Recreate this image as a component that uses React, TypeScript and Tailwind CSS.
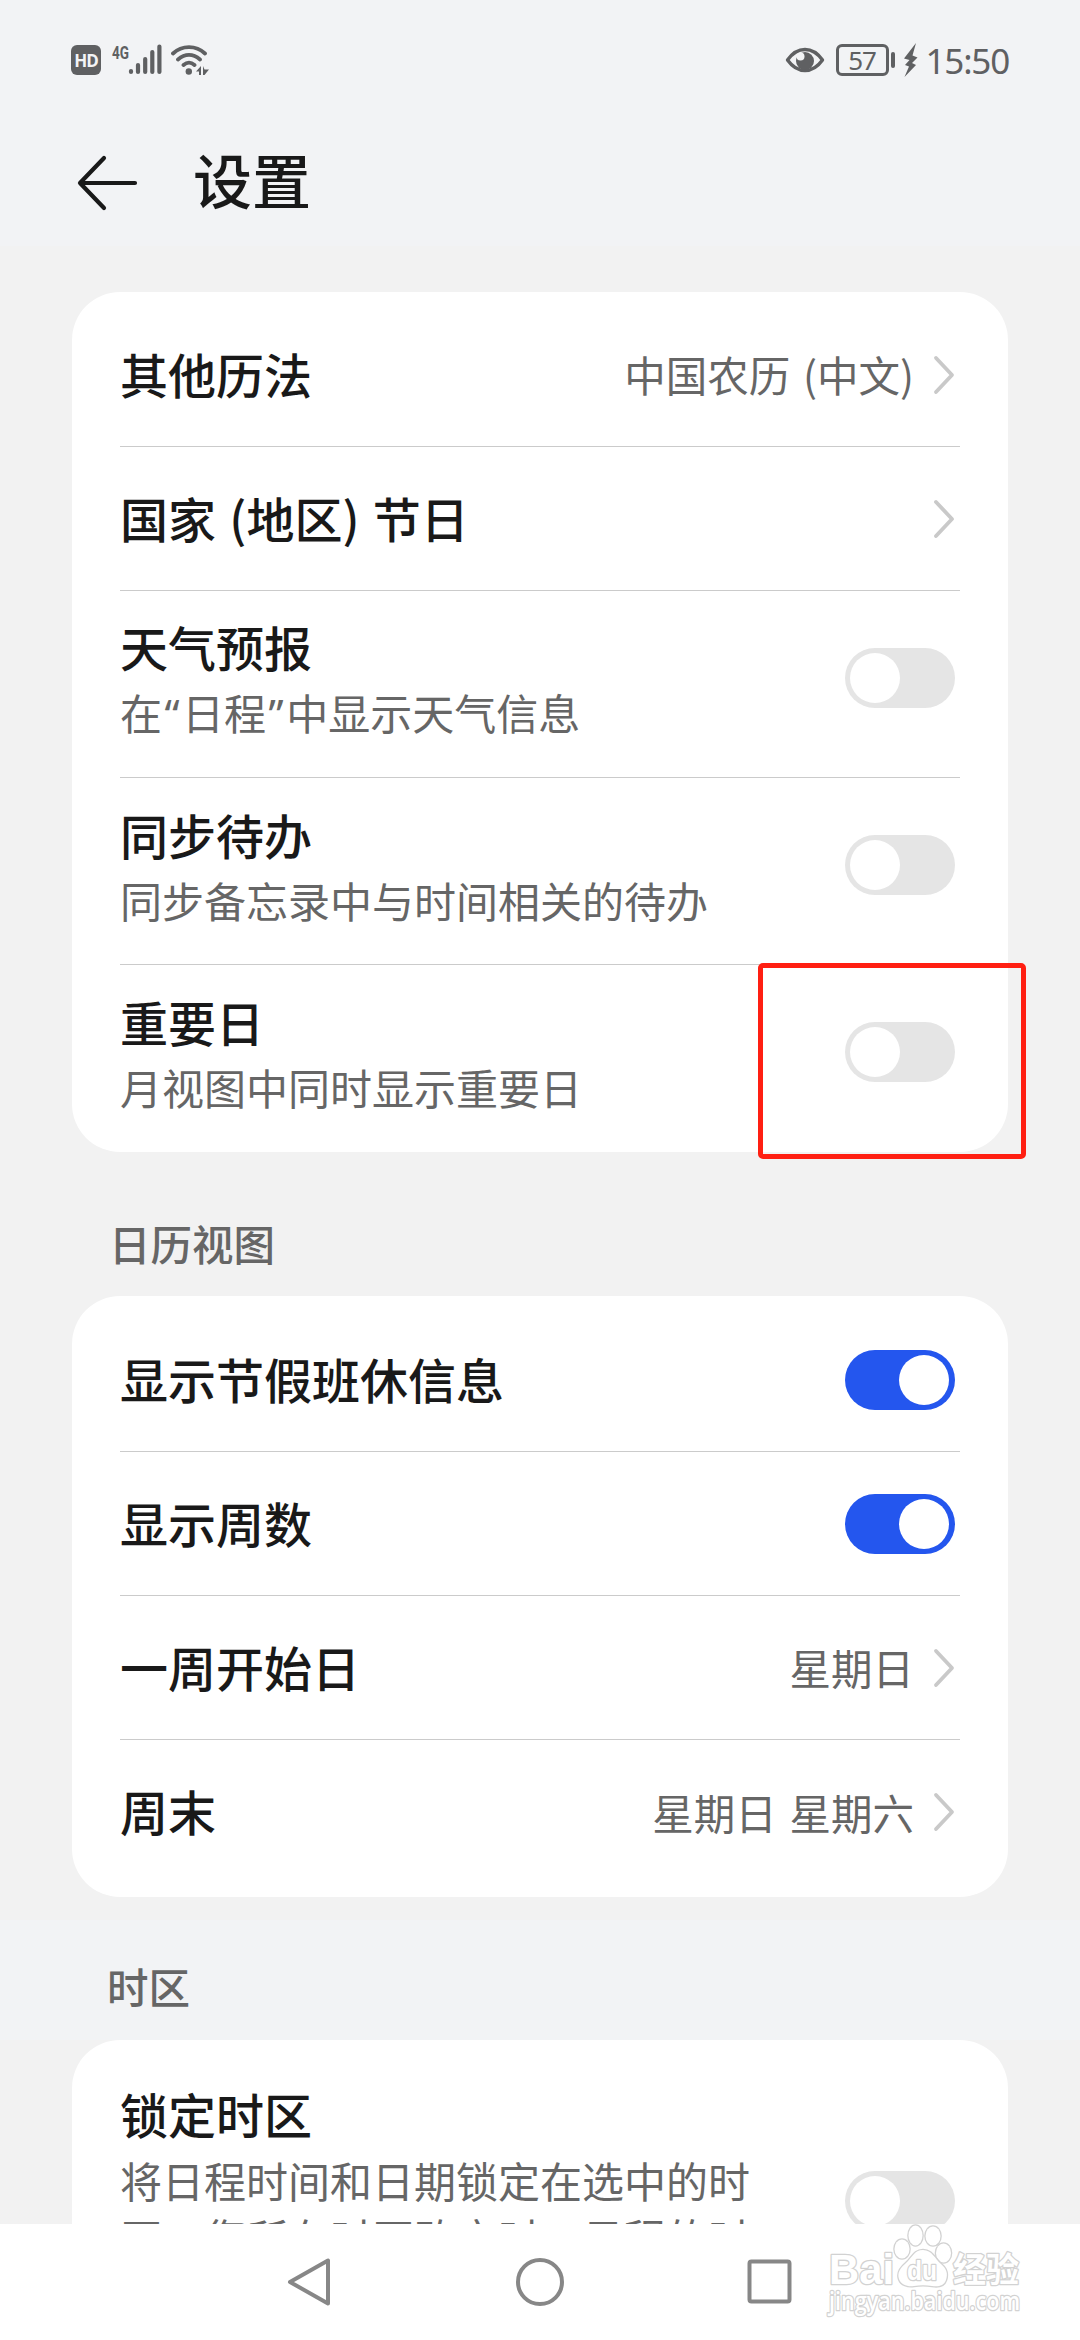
import type { ReactNode } from "react";

type RowProps = {
  title: string;
  value?: string;
  hint?: ReactNode;
  toggle?: "on" | "off";
  last?: boolean;
};

function StatusBar() {
  return (
    <div className="flex h-[120px] shrink-0 items-center justify-between pl-[71px] pr-[71px] text-[#5f6062]">
      <div className="flex items-center">
        <div className="flex h-[30px] w-[30px] items-center justify-center rounded-[6px] bg-[#5f6062] font-['Open_Sans',sans-serif] text-[17px] font-bold leading-none tracking-[-1px] text-[#f2f3f5]">
          HD
        </div>
        {/* Signal */}
        <svg className="ml-[10px] overflow-visible" width="52" height="32" viewBox="0 0 52 32" fill="none" stroke="currentColor" strokeWidth="4.2" strokeLinecap="round">
          <text x="1" y="14.5" fontSize="19" fontWeight="700" textLength="17" lengthAdjust="spacingAndGlyphs" fill="currentColor" stroke="none" fontFamily="Roboto, sans-serif">
            4G
          </text>
          <path d="M20 27v1M27 21v7M34.2 15v13M41.3 8v20M48.4 2.5V28" />
        </svg>
        {/* Wi-Fi with traffic marks */}
        <svg className="ml-[8px]" width="40" height="32" viewBox="0 0 40 32" fill="none" stroke="currentColor" strokeWidth="3.8" strokeLinecap="round">
          <path d="M2 9.5C11 1 25 1 34 9.5M7 15.5C14 9.5 22 9.5 29 15.5M12.5 21C16 18 20 18 23.5 21" />
          <circle cx="17.8" cy="27.5" r="3.2" fill="currentColor" stroke="none" />
          <path d="M30 22v9h-2v-3.5h-3zM32 22l1.5 3.5H38L33.5 31H32z" fill="currentColor" stroke="none" />
        </svg>
      </div>

      <div className="flex items-center">
        <svg width="40" height="28" viewBox="0 0 40 28" fill="none">
          <path d="M2.5 14C7.5 7 13 3.5 20 3.5S32.5 7 37.5 14C32.5 21 27 24.5 20 24.5S7.5 21 2.5 14z" stroke="currentColor" strokeWidth="3.4" strokeLinejoin="round" />
          <circle cx="20" cy="15" r="9" fill="currentColor" />
          <circle cx="15.5" cy="10.5" r="4" fill="#f2f3f5" />
        </svg>
        <div className="ml-[11px] flex h-[32px] w-[53px] items-center justify-center rounded-[6px] border-[3px] border-[#5f6062] font-['Noto_Sans',sans-serif] text-[26px] leading-none tracking-[-1px]">
          57
        </div>
        <div className="ml-[2px] h-[16px] w-[4px] rounded-sm bg-[#5f6062]" />
        <svg className="ml-[8px]" width="15" height="34" viewBox="0 0 15 34" fill="currentColor">
          <path d="M13 0L1 15.5l5.5 1.5L2 22l4 1.5L1.5 34 13 22l-4-2 5.5-5.5-5-2z" />
        </svg>
        <div className="ml-[8px] font-['Noto_Sans',sans-serif] text-[35px] leading-none tracking-[-1.2px]">15:50</div>
      </div>
    </div>
  );
}

function Chevron() {
  return (
    <svg className="ml-[19px] mr-[5px]" width="22" height="40" viewBox="0 0 22 40" fill="none" stroke="#c9c9c9" strokeWidth="3.8" strokeLinecap="round" strokeLinejoin="round">
      <path d="M3 3l16 17L3 37" />
    </svg>
  );
}

function Toggle({ on }: { on: boolean }) {
  return (
    <div
      className={
        on
          ? "mr-[5px] flex h-[60px] w-[110px] items-center justify-end rounded-full bg-[#2456ee] px-[6px]"
          : "mr-[5px] flex h-[60px] w-[110px] items-center rounded-full bg-[#e5e5e5] px-[5px]"
      }
    >
      <div className="h-[50px] w-[50px] rounded-full bg-white" />
    </div>
  );
}

// Western quote glyphs, narrower than the full-width CJK ones
function Quote({ children }: { children: string }) {
  return <span className="px-[2.5px] font-['Noto_Sans',sans-serif]">{children}</span>;
}

function Row({ title, value, hint, toggle, last }: RowProps) {
  return (
    <div
      className={
        (hint ? "h-[187px] pb-[37px] pt-[24px] " : "h-[144px] ") +
        (last ? "" : "border-b border-[#cbcbcb] ") +
        "flex items-center justify-between"
      }
    >
      <div className={hint ? "" : "pb-1"}>
        <div className="text-[48px] font-medium leading-[64px] text-[#191919] [word-spacing:2.5px]">{title}</div>
        {hint && <div className="mt-[6px] text-[42px] leading-[56px] text-[#666]">{hint}</div>}
      </div>
      {toggle ? (
        <Toggle on={toggle === "on"} />
      ) : (
        <div className="flex items-center">
          <span className="text-[41.5px] text-[#666] [word-spacing:3.5px]">{value}</span>
          <Chevron />
        </div>
      )}
    </div>
  );
}

function Card({ children, className }: { children: ReactNode; className: string }) {
  return <section className={`mx-[72px] rounded-[48px] bg-white px-12 ${className}`}>{children}</section>;
}

function NavBar() {
  return (
    <nav className="flex h-[116px] shrink-0 items-center justify-center gap-[180px] bg-white">
      <svg width="50" height="50" viewBox="0 0 50 50" fill="none" stroke="#878787" strokeWidth="4" strokeLinejoin="round">
        <path d="M5 25L43 3.5v43z" />
      </svg>
      <svg width="50" height="50" viewBox="0 0 50 50" fill="none" stroke="#878787" strokeWidth="4">
        <circle cx="25" cy="25" r="22" />
      </svg>
      <svg width="50" height="50" viewBox="0 0 50 50" fill="none" stroke="#878787" strokeWidth="4">
        <rect x="4.5" y="4.5" width="40" height="40" rx="2" />
      </svg>
    </nav>
  );
}

function Watermark() {
  return (
    <svg
      className="absolute left-[824px] top-[2220px]"
      width="200"
      height="100"
      viewBox="0 0 200 100"
      fill="#fff"
      stroke="#d2d2d2"
      strokeWidth="2.6"
      strokeLinejoin="round"
      paintOrder="stroke"
    >
      <text x="5" y="64" fontSize="42" fontWeight="700" textLength="65" lengthAdjust="spacingAndGlyphs" fontFamily="Liberation Sans, sans-serif">
        Bai
      </text>
      <ellipse cx="78" cy="29" rx="7.5" ry="9.5" />
      <ellipse cx="91.5" cy="15.5" rx="7" ry="10" />
      <ellipse cx="109" cy="16" rx="7.5" ry="9.5" />
      <ellipse cx="119.5" cy="33" rx="7.5" ry="9.5" />
      <path d="M99 30c9 0 12 9 18 14s7 10 5 16-8 7-14 6-12-1-18 0-13-1-15-7 1-11 7-16 8-13 17-13z" />
      <text x="83" y="60" fontSize="28" fontWeight="700" textLength="30" lengthAdjust="spacingAndGlyphs" fontFamily="Liberation Sans, sans-serif">
        du
      </text>
      <text x="129" y="62" fontSize="34" fontWeight="700" textLength="66" lengthAdjust="spacingAndGlyphs">
        经验
      </text>
      <text x="5" y="90" fontSize="25" textLength="191" lengthAdjust="spacingAndGlyphs" fontFamily="Open Sans, sans-serif" fontWeight="600">
        jingyan.baidu.com
      </text>
    </svg>
  );
}

export default function App() {
  return (
    <div className="relative flex h-[2340px] w-[1080px] flex-col overflow-hidden bg-[#f2f2f2] font-['Noto_Sans_CJK_SC',sans-serif]">
      <div className="bg-[#f2f3f5]">
        <StatusBar />
        <header className="flex h-[126px] items-center pl-[76px]">
          <svg width="64" height="58" viewBox="0 0 64 58" fill="none" stroke="#191919" strokeWidth="4.2" strokeLinecap="round" strokeLinejoin="round">
            <path d="M28 4L4 29l24 25M4 29h55" />
          </svg>
          <h1 className="ml-[53px] pb-[10px] text-[59px] font-medium leading-none text-[#191919]">设置</h1>
        </header>
      </div>

      <main className="flex min-h-0 flex-1 flex-col overflow-hidden pt-[46px] *:shrink-0">
        <Card className="h-[860px] pt-[11px]">
          <Row title="其他历法" value="中国农历 (中文)" />
          <Row title="国家 (地区) 节日" />
          <Row
            title="天气预报"
            hint={
              <>
                在<Quote>“</Quote>日程<Quote>”</Quote>中显示天气信息
              </>
            }
            toggle="off"
          />
          <Row title="同步待办" hint="同步备忘录中与时间相关的待办" toggle="off" />
          <Row title="重要日" hint="月视图中同时显示重要日" toggle="off" last />
        </Card>

        <h2 className="flex h-[144px] items-center pl-[109px] pt-[39px] text-[41.5px] font-medium leading-none text-[#666]">日历视图</h2>
        <Card className="h-[601px] pt-3">
          <Row title="显示节假班休信息" toggle="on" />
          <Row title="显示周数" toggle="on" />
          <Row title="一周开始日" value="星期日" />
          <Row title="周末" value="星期日 星期六" last />
        </Card>

        <h2 className="mt-[23px] flex h-[120px] items-center bg-[#f2f3f5] pl-[107px] pt-[13px] text-[41.5px] font-medium leading-none text-[#666]">时区</h2>
        <Card className="flex h-[320px] items-start justify-between pt-[41px]">
          <div>
            <div className="text-[48px] font-medium leading-[64px] text-[#191919]">锁定时区</div>
            <div className="mt-[6px] w-[640px] text-[42px] leading-[57px] text-[#666]">
              将日程时间和日期锁定在选中的时区，您所在时区改变时，日程的时
            </div>
          </div>
          <div className="pt-[90px]">
            <Toggle on={false} />
          </div>
        </Card>
      </main>

      <NavBar />

      {/* Callout round the last switch of the first card */}
      <div className="absolute left-[758px] top-[963px] h-[196px] w-[268px] rounded-[5px] border-[5px] border-[#ff1f12]" />
      <Watermark />
    </div>
  );
}
